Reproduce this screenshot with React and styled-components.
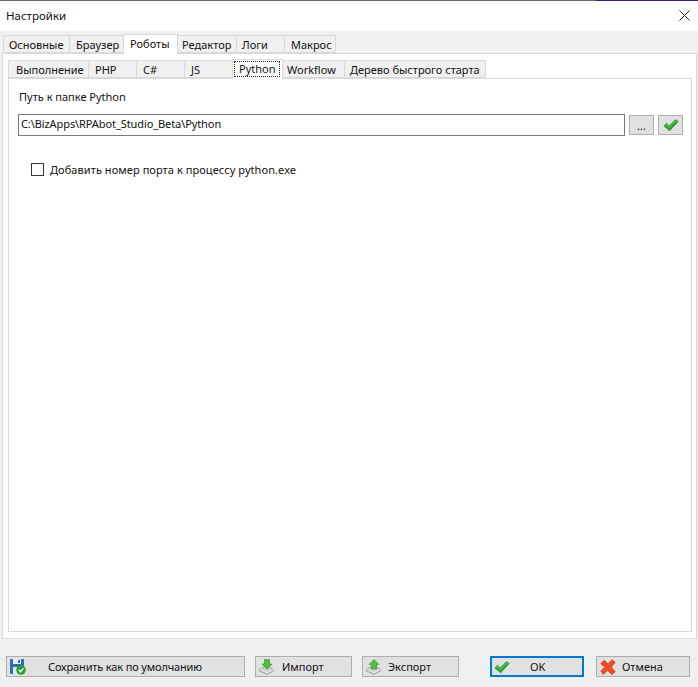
import React from 'react'
import styled, { createGlobalStyle } from 'styled-components'

const GlobalStyle = createGlobalStyle`
  html, body {
    margin: 0;
    padding: 0;
    background: #f0f0f0;
  }
  * {
    box-sizing: border-box;
  }
`

const outerTabs = [
  { label: 'Основные', width: 66, pad: 6 },
  { label: 'Браузер', width: 54, pad: 7 },
  { label: 'Роботы', width: 54, pad: 7, active: true },
  { label: 'Редактор', width: 59, pad: 5 },
  { label: 'Логи', width: 48, pad: 6 },
  { label: 'Макрос', width: 51, pad: 7 },
]

const innerTabs = [
  { label: 'Выполнение', width: 80, pad: 8 },
  { label: 'PHP', width: 48, pad: 7 },
  { label: 'C#', width: 48, pad: 7 },
  { label: 'JS', width: 48, pad: 7 },
  { label: 'Python', width: 50, pad: 2, active: true, focused: true },
  { label: 'Workflow', width: 62, pad: 5 },
  { label: 'Дерево быстрого старта', width: 141, pad: 6 },
]

function CheckIcon({ size = 16 }) {
  return (
    <svg width={size} height={size} viewBox="0 0 18 18">
      <path d="M1 10 L4 7 L7 10 L14 3 L17 5 L7.5 15.5 Z" fill="#2fa52c" stroke="#1e8a1e" strokeWidth="0.8" />
      <path d="M2.5 10 L4 8.5 L7 11.5 L14 4.5 L15 5" fill="none" stroke="#7fd66f" strokeWidth="1" />
    </svg>
  )
}

function SaveIcon() {
  return (
    <svg width="16" height="16" viewBox="0 0 16 16">
      <path d="M0 0 H14 V15 H0 Z" fill="#2f6db5" />
      <rect x="3" y="0" width="8" height="5" fill="#e8edf3" />
      <rect x="8" y="1" width="2" height="3" fill="#2f6db5" />
      <rect x="3" y="8" width="6" height="7" fill="#dfe7f0" />
      <circle cx="11" cy="11" r="4.8" fill="#2fa02f" />
      <path d="M8.8 11 L10.6 12.8 L13.4 9.4" fill="none" stroke="#fff" strokeWidth="1.4" />
    </svg>
  )
}

function TrayIcon({ up }) {
  return (
    <svg width="16" height="16" viewBox="0 0 16 16">
      <path d="M0.5 10 L7 7 L14.5 10 L14.5 12 L8 15.5 L0.5 12 Z" fill="#c9c9c9" stroke="#8a8a8a" strokeWidth="0.6" />
      <path d="M1 10 L8 13.5 L14.5 10" fill="none" stroke="#f5f5f5" strokeWidth="1" />
      {up ? (
        <path d="M8 0.5 L13 5.5 L10.5 5.5 L10.5 10 L5.5 10 L5.5 5.5 L3 5.5 Z" fill="#4fc03a" stroke="#2c8f22" strokeWidth="0.6" />
      ) : (
        <path d="M5.5 0.5 H10.5 V5 H13 L8 10 L3 5 H5.5 Z" fill="#4fc03a" stroke="#2c8f22" strokeWidth="0.6" />
      )}
    </svg>
  )
}

function CancelIcon() {
  return (
    <svg width="16" height="16" viewBox="0 0 20 20">
      <path
        d="M1 6 L5 1.5 L10 6 L15 1 L19 4 L14 10 L19 16 L14.5 19.5 L9.5 14 L4 19.5 L1 15 L6 10 Z"
        fill="#ef4c26"
        stroke="#d93a1c"
        strokeWidth="1"
        strokeLinejoin="round"
      />
    </svg>
  )
}

export default function App() {
  return (
    <Dialog>
      <GlobalStyle />
      <TitleBar>
        <Title>Настройки</Title>
        <CloseIcon viewBox="0 0 11 11">
          <path d="M0.5 0.5 L10.5 10.5 M10.5 0.5 L0.5 10.5" stroke="#222" strokeWidth="1" fill="none" />
        </CloseIcon>
      </TitleBar>
      <Body>
        <TabStrip $left={3}>
          {outerTabs.map((t) => (
            <Tab key={t.label} $width={t.width} $pad={t.pad} $active={t.active}>
              {t.label}
            </Tab>
          ))}
        </TabStrip>
        <OuterPane>
          <TabStrip $left={0}>
            {innerTabs.map((t) => (
              <Tab key={t.label} $width={t.width} $pad={t.pad} $active={t.active}>
                {t.focused ? <Focus>{t.label}</Focus> : t.label}
              </Tab>
            ))}
          </TabStrip>
          <InnerPane>
            <FieldLabel>Путь к папке Python</FieldLabel>
            <PathRow>
              <PathInput>C:\BizApps\RPAbot_Studio_Beta\Python</PathInput>
              <SmallButton>...</SmallButton>
              <SmallButton>
                <CheckIcon />
              </SmallButton>
            </PathRow>
            <CheckRow>
              <CheckBox />
              <span>Добавить номер порта к процессу python.exe</span>
            </CheckRow>
          </InnerPane>
        </OuterPane>
        <Footer>
          <Button $width={239} $gap={10}>
            <SaveIcon />
            <ButtonText $pad={22} $tight>Сохранить как по умолчанию</ButtonText>
          </Button>
          <Button $width={97} $gap={10}>
            <TrayIcon />
            <ButtonText $pad={7}>Импорт</ButtonText>
          </Button>
          <Button $width={97} $gap={31}>
            <TrayIcon up />
            <ButtonText $pad={6}>Экспорт</ButtonText>
          </Button>
          <Button $width={94} $gap={12} $default>
            <CheckIcon />
            <ButtonText $pad={20}>OK</ButtonText>
          </Button>
          <Button $width={94} $gap={0}>
            <CancelIcon />
            <ButtonText $pad={6}>Отмена</ButtonText>
          </Button>
        </Footer>
      </Body>
    </Dialog>
  )
}

const Dialog = styled.div`
  width: 698px;
  height: 687px;
  display: flex;
  flex-direction: column;
  overflow: hidden;
  font-family: 'Noto Sans', 'Open Sans', sans-serif;
  font-size: 11px;
  color: #111;
  background: #f0f0f0;
`

const TitleBar = styled.div`
  height: 31px;
  flex: none;
  display: flex;
  align-items: center;
  justify-content: space-between;
  padding: 0 8px 2px 6px;
  background: #fff;
  border-top: 1px solid #6b6b6b;
  position: relative;

  &::after {
    content: '';
    position: absolute;
    top: -1px;
    right: 0;
    width: 102px;
    height: 1px;
    background: #3d1a78;
  }
`

const Title = styled.div`
  font-size: 11.5px;
`

const CloseIcon = styled.svg`
  width: 11px;
  height: 11px;
`

const Body = styled.div`
  flex: 1;
  display: flex;
  flex-direction: column;
  padding: 3px 0 0;
  min-height: 0;
`

const TabStrip = styled.div`
  display: flex;
  align-items: flex-end;
  height: 19px;
  flex: none;
  padding-left: ${(p) => p.$left}px;
  position: relative;
  z-index: 1;
`

const Tab = styled.div`
  width: ${(p) => p.$width + 1}px;
  height: ${(p) => (p.$active ? 20 : 18)}px;
  margin-right: -1px;
  margin-bottom: ${(p) => (p.$active ? -1 : 0)}px;
  padding: ${(p) => (p.$active ? '0' : '1px')} 0 ${(p) => (p.$active ? '2px' : '0')} ${(p) => p.$pad - 1}px;
  display: flex;
  align-items: center;
  background: ${(p) => (p.$active ? '#fff' : '#f0f0f0')};
  border: 1px solid #d9d9d9;
  border-bottom: ${(p) => (p.$active ? 'none' : '1px solid #d9d9d9')};
  position: relative;
  z-index: ${(p) => (p.$active ? 1 : 0)};
  white-space: nowrap;
`

const Focus = styled.span`
  display: flex;
  align-items: center;
  padding-left: 5px;
  width: 46px;
  height: 16px;
  outline: 1px dotted #222;
  outline-offset: -1px;
`

const OuterPane = styled.div`
  flex: none;
  height: 586px;
  margin: 0 1px 0 2px;
  padding: 5px 4px 6px 5px;
  background: #fff;
  border: 1px solid #d9d9d9;
  display: flex;
  flex-direction: column;
`

const InnerPane = styled.div`
  flex: 1;
  background: #fff;
  border: 1px solid #d9d9d9;
  padding: 11px 8px 0 9px;
`

const FieldLabel = styled.div`
  line-height: 14px;
  padding-left: 1px;
`

const PathRow = styled.div`
  display: flex;
  align-items: center;
  gap: 4px;
  margin-top: 10px;
`

const PathInput = styled.div`
  width: 607px;
  height: 22px;
  border: 1px solid #7a7a7a;
  background: #fff;
  padding-left: 2px;
  line-height: 18px;
  letter-spacing: -0.09px;
  white-space: nowrap;
`

const SmallButton = styled.div`
  width: 25px;
  height: 20px;
  display: flex;
  align-items: center;
  justify-content: center;
  background: #e1e1e1;
  border: 1px solid #adadad;
`

const CheckRow = styled.div`
  display: flex;
  align-items: center;
  gap: 6px;
  margin: 26px 0 0 13px;
  letter-spacing: 0.07px;
`

const CheckBox = styled.div`
  width: 13px;
  height: 13px;
  background: #fff;
  border: 1px solid #333;
`

const Footer = styled.div`
  display: flex;
  align-items: center;
  padding: 17px 0 0 6px;
`

const Button = styled.div`
  width: ${(p) => p.$width}px;
  height: 21px;
  margin-right: ${(p) => p.$gap}px;
  display: flex;
  align-items: center;
  padding-left: ${(p) => (p.$default ? 2 : 3)}px;
  background: #e1e1e1;
  border: ${(p) => (p.$default ? '2px solid #0078d7' : '1px solid #adadad')};

  svg {
    flex: none;
  }
`

const ButtonText = styled.span`
  padding-left: ${(p) => p.$pad}px;
  letter-spacing: ${(p) => (p.$tight ? '-0.15px' : 'normal')};
  white-space: nowrap;
`
